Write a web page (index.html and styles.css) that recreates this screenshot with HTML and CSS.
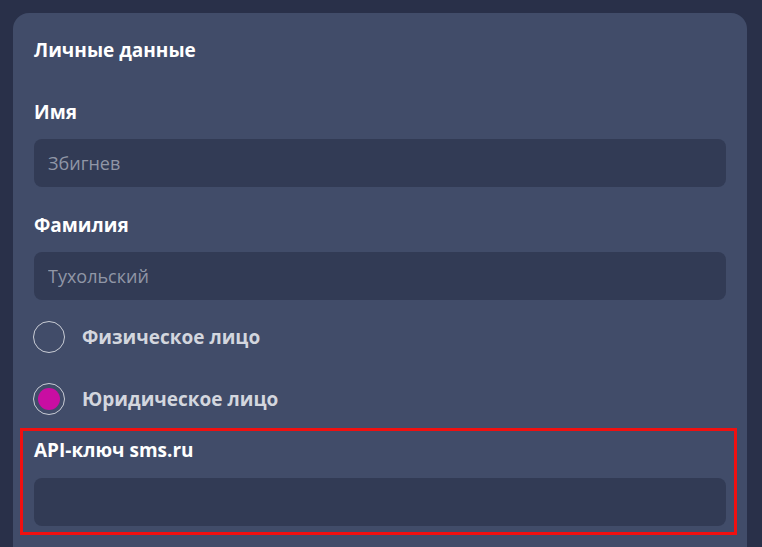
FILE: index.html
```html
<!DOCTYPE html>
<html lang="ru">
<head>
<meta charset="utf-8">
<title>Личные данные</title>
<link rel="stylesheet" href="styles.css">
</head>
<body>
<div class="card">
  <h2 class="card-title">Личные данные</h2>

  <div class="field field-first">
    <label class="field-label" for="name">Имя</label>
    <input class="field-input" id="name" type="text" placeholder="Збигнев">
  </div>

  <div class="field">
    <label class="field-label" for="surname">Фамилия</label>
    <input class="field-input" id="surname" type="text" placeholder="Тухольский">
  </div>

  <div class="radios">
    <label class="radio-row">
      <span class="radio"></span>
      <span class="radio-text">Физическое лицо</span>
    </label>
    <label class="radio-row">
      <span class="radio radio-checked"><span class="radio-dot"></span></span>
      <span class="radio-text">Юридическое лицо</span>
    </label>
  </div>

  <div class="field field-highlight">
    <label class="field-label" for="api">API-ключ sms.ru</label>
    <input class="field-input" id="api" type="text">
  </div>
</div>
</body>
</html>
```
FILE: styles.css
```css
* { box-sizing: border-box; }

html, body {
  margin: 0;
  height: 100%;
  overflow: hidden;
}

body {
  background: #293049;
  padding: 13px 15px 0 13px;
  font-family: "Open Sans", "Noto Sans", sans-serif;
}

.card {
  background: #414c69;
  border-radius: 16px 16px 0 0;
  padding: 25px 21px 0 21px;
  height: 100%;
}

.card-title {
  margin: 0;
  font-size: 19px;
  line-height: 24px;
  font-weight: 700;
  color: #ffffff;
}

.field {
  display: flex;
  flex-direction: column;
}

.field-first { margin-top: 38px; }
.field + .field { margin-top: 26px; }

.field-label {
  font-size: 19px;
  line-height: 24px;
  font-weight: 700;
  color: #ffffff;
  margin-bottom: 15px;
}

.field-input {
  display: block;
  width: 100%;
  height: 48px;
  border: none;
  outline: none;
  border-radius: 8px;
  background: #323b55;
  padding: 0 14px;
  font-family: "Open Sans", "Noto Sans", sans-serif;
  font-size: 18px;
  color: #e0e3ea;
}

.field-input::placeholder {
  color: #9096a6;
}

.radios {
  margin-top: 21px;
  display: flex;
  flex-direction: column;
  gap: 30px;
}

.radio-row {
  display: flex;
  align-items: center;
  gap: 17px;
  height: 32px;
  margin-left: -1px;
}

.radio {
  width: 32px;
  height: 32px;
  border-radius: 50%;
  border: 1.5px solid #c9ccd5;
  display: flex;
  align-items: center;
  justify-content: center;
  flex: none;
}

.radio-dot {
  width: 22px;
  height: 22px;
  border-radius: 50%;
  background: #c90ea2;
}

.radio-text {
  font-size: 19px;
  line-height: 24px;
  font-weight: 700;
  color: #d3d6de;
}

.field.field-highlight {
  margin: 13px -11px 0 -14px;
  border: 3px solid #f01010;
  padding: 7px 8px 6px 11px;
}

.field-highlight .field-label {
  margin-bottom: 16px;
}
```
